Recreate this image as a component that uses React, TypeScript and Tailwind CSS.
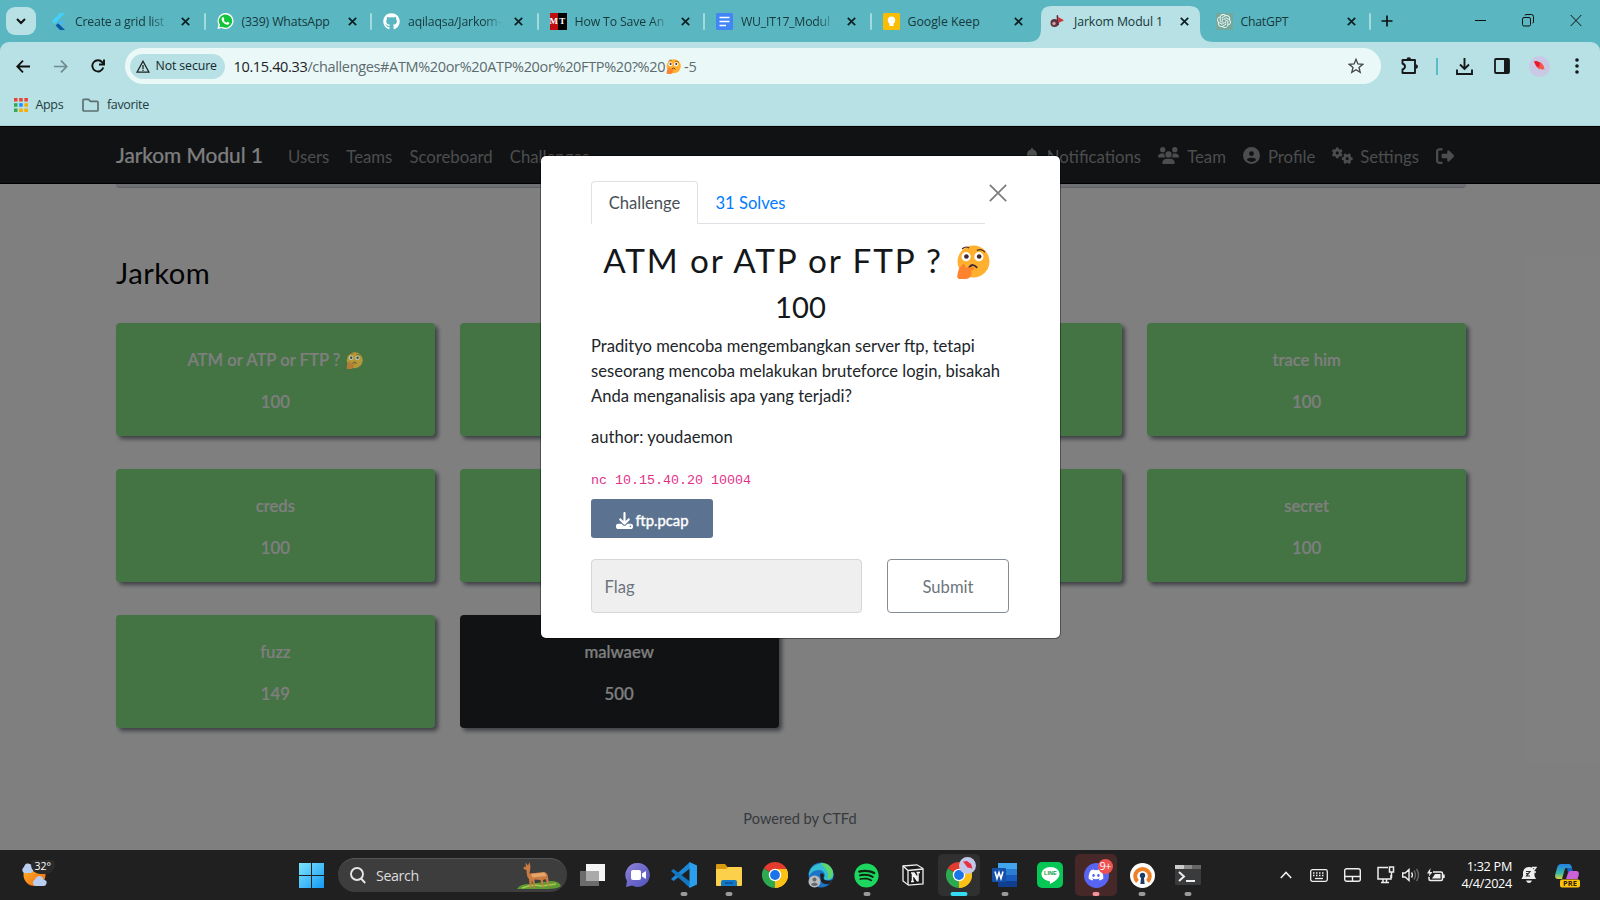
import type { ReactNode } from "react";
import { FaBell, FaUsers, FaCircleUser, FaGears, FaRightFromBracket, FaDownload, FaGithub, FaDiscord, FaSpotify } from "react-icons/fa6";
import { SiOpenai } from "react-icons/si";

function Thinking({ size }: { size: number }) {
  return (
    <svg width={size} height={size} viewBox="0 0 32 32" className="shrink-0">
      <circle cx="16.5" cy="15.5" r="15" fill="#ffb02e" />
      <circle cx="9.5" cy="11" r="4.3" fill="#fff" />
      <circle cx="21.5" cy="11" r="4.3" fill="#fff" />
      <circle cx="9.8" cy="10.8" r="2.2" fill="#402a32" />
      <circle cx="21.8" cy="10.8" r="2.2" fill="#402a32" />
      <path d="M6 3.500Q9 .8 12 2.600M20 5Q24 3 27 6.500" fill="none" stroke="#4a2c24" strokeWidth="1.1" strokeLinecap="round" />
      <path d="M12.500 20.800Q16 16.800 19.500 21" fill="none" stroke="#402a32" strokeWidth="1.700" strokeLinecap="round" />
      <path d="M6 18.500c1.500-1.500 3 .2 2.700 3L15.500 21c2 0 2 2.300.5 2.700l-2 .6c1.500 4-.5 7.700-5 7.700H3.500C1.500 32 1 30.500 1.300 28.500L2 25c.5-3 2.500-5 4-6.500z" fill="#ff822d" />
    </svg>
  );
}

function FlutterIcon() {
  return (
    <svg width="15" height="17" viewBox="0 0 15 17">
      <path d="M9 0h5L3.500 11 1 8z" fill="#43d1fb" />
      <path d="M9 8h5L9.500 12.500 7 10z" fill="#43b8f5" />
      <path d="M7 10.200 9.500 12.600 14 17H9L4.600 12.600z" fill="#0c5aa6" />
    </svg>
  );
}

function WhatsIcon() {
  return (
    <svg width="18" height="18" viewBox="0 0 18 18">
      <path d="M9 .5a8.500 8.500 0 1 1-4 16L.5 17.500 1.600 13A8.500 8.500 0 0 1 9 .5z" fill="#fff" />
      <path d="M9 2a7 7 0 1 1-3.500 13L2.500 15.700 3.200 13A7 7 0 0 1 9 2z" fill="#12c43a" />
      <path d="M5.500 5.200q1-1 1.600 0l.7 1.500q0 .6-.7 1.200 1 2 3 2.900.8-1 1.200-.9l1.700.9q.4.600-.5 1.600-1.500 1.200-4.500-.6T5 8q-.400-1.800.500-2.800z" fill="#fff" />
    </svg>
  );
}

function MtIcon() {
  return (
    <span className="flex h-[17px] w-[17px] bg-black font-['Liberation_Serif',serif] text-[9px] leading-[17px] font-bold text-white">
      <span className="w-[8.500px] bg-[#c00d0d] text-center">M</span>
      <span className="w-[8.500px] text-center">T</span>
    </span>
  );
}

function DocsIcon() {
  return (
    <svg width="17" height="17" viewBox="0 0 17 17">
      <rect width="17" height="17" rx="1.500" fill="#4285f4" />
      <path d="M3.500 4.500h10M3.500 8.500h10M3.500 12.500h6.500" stroke="#fff" strokeWidth="1.700" />
    </svg>
  );
}

function KeepIcon() {
  return (
    <svg width="17" height="17" viewBox="0 0 17 17">
      <rect width="17" height="17" rx="1.500" fill="#fbbc04" />
      <circle cx="8.500" cy="7.300" r="3.700" fill="#fff" />
      <path d="M6.500 9h4v4h-4z" fill="#fff" />
    </svg>
  );
}

function FlagIcon() {
  return (
    <svg width="15" height="15" viewBox="0 0 15 15">
      <circle cx="4.500" cy="9" r="4" fill="#5b3540" />
      <circle cx="4" cy="9.500" r="1.700" fill="#d8a0a4" />
      <path d="M6.500 1.500 8 1l1 10-1.500.5z" fill="#6b2530" />
      <path d="M8 3 14 6.200 8.500 9z" fill="#c8323c" />
    </svg>
  );
}

function GptIcon() {
  return (
    <span className="flex h-[17px] w-[17px] items-center justify-center bg-[#74a89c]">
      <SiOpenai size={14} color="#f1f7f5" />
    </span>
  );
}

type TabInfo = { title: string; icon: ReactNode; active?: boolean; faded?: boolean; sep: boolean; track: string };

const tabs: TabInfo[] = [
  { title: "Create a grid list", icon: <FlutterIcon />, faded: true, sep: true, track: "tracking-[-0.220px]" },
  { title: "(339) WhatsApp", icon: <WhatsIcon />, sep: true, track: "tracking-[-0.150px]" },
  { title: "aqilaqsa/Jarkom-", icon: <FaGithub size={17} color="#fff" />, faded: true, sep: true, track: "tracking-[-0.200px]" },
  { title: "How To Save An", icon: <MtIcon />, faded: true, sep: true, track: "tracking-[-0.150px]" },
  { title: "WU_IT17_Modul", icon: <DocsIcon />, faded: true, sep: true, track: "tracking-[-0.250px]" },
  { title: "Google Keep", icon: <KeepIcon />, sep: false, track: "tracking-[-0.020px]" },
  { title: "Jarkom Modul 1", icon: <FlagIcon />, active: true, sep: false, track: "tracking-[-0.100px]" },
  { title: "ChatGPT", icon: <GptIcon />, sep: true, track: "tracking-[-0.250px]" },
];

function Tab({ tab }: { tab: TabInfo }) {
  return (
    <div className="relative flex h-full w-[166.500px] shrink-0 items-start">
      {tab.active && (
        <svg width="190" height="36" viewBox="0 0 190 36" className="absolute top-[6px] left-[-10px]">
          <path d="M0 36Q13 36 13 23V10Q13 0 23 0H162Q172 0 172 10V23Q172 36 186 36z" fill="#b7e1e4" />
        </svg>
      )}
      <div className="relative mt-[6px] flex h-[30px] w-full items-center pl-[11px]">
        <span className="flex w-[17px] justify-center">{tab.icon}</span>
        <span
          className={
            "mt-[2px] ml-[8px] w-[95px] text-[12.300px] whitespace-nowrap text-[#16383c] " +
            (tab.faded ? "[mask-image:linear-gradient(to_right,black_80%,transparent)] " : "") +
            tab.track
          }
        >
          {tab.title}
        </span>
        <svg width="9" height="9" viewBox="0 0 9 9" className="ml-[11px]">
          <path d="M.8.800 8.200 8.200M8.200.800.800 8.200" stroke="#0c1f22" strokeWidth="1.700" />
        </svg>
        {tab.sep && <span className="ml-auto h-[17px] w-[2px] rounded bg-[#a5dadd]" />}
      </div>
    </div>
  );
}

function BrowserChrome() {
  return (
    <div className="h-[126px] shrink-0 bg-[#5ab7c1] font-['Open_Sans',sans-serif]">
      <div className="flex h-[42px] pl-[6px]">
        <div className="mt-[7px] mr-[3px] flex h-[28px] w-[30px] items-center justify-center rounded-[9px] bg-[#b7e1e4]">
          <svg width="10" height="7" viewBox="0 0 10 7">
            <path d="M1 1l4 4 4-4" fill="none" stroke="#111" strokeWidth="2" />
          </svg>
        </div>
        {tabs.map((t) => (
          <Tab key={t.title} tab={t} />
        ))}
        <svg width="12" height="12" viewBox="0 0 12 12" className="mt-[15px] ml-[9.500px]">
          <path d="M6 .5v11M.5 6h11" stroke="#111" strokeWidth="1.700" />
        </svg>
        <div className="mt-[14px] ml-auto flex gap-[36px] pr-[18px]">
          <svg width="11" height="13" viewBox="0 0 11 13"><path d="M0 6.500h11" stroke="#111" /></svg>
          <svg width="12" height="13" viewBox="0 0 12 13" fill="none" stroke="#111">
            <rect x=".5" y="3.500" width="8" height="8.500" rx="1.500" />
            <path d="M3 1.500q0-1 1-1h5.500q2 0 2 2V8q0 1-1 1" />
          </svg>
          <svg width="12" height="13" viewBox="0 0 12 13"><path d="M.7 1 11.300 12M11.300 1 .7 12" stroke="#111" /></svg>
        </div>
      </div>
      <div className="h-[84px] rounded-t-[9px] border-b border-[#a6d3d6] bg-[#b7e1e4]">
        <div className="flex h-[48px] items-center">
          <div className="flex w-[125px] items-center gap-[24px] pl-[16px] text-[#111]">
            <svg width="14" height="13" viewBox="0 0 14 13" fill="none" stroke="currentColor" strokeWidth="1.800"><path d="M14 6.500H1.500M7 .7 1.300 6.500 7 12.300" /></svg>
            <svg width="14" height="13" viewBox="0 0 14 13" fill="none" stroke="#6f8b8e" strokeWidth="1.700"><path d="M0 6.500h12.500M7 .7l5.700 5.800L7 12.300" /></svg>
            <svg width="14" height="14" viewBox="0 0 14 14" className="-ml-px" fill="none" stroke="currentColor" strokeWidth="1.900"><path d="M12.300 8.500A5.600 5.600 0 1 1 11.300 3.300L12.800 5" /><path d="M13 .5v5H8" /></svg>
          </div>
          <div className="flex h-[36px] w-[1256px] items-center rounded-full bg-[#ebf8f8] pl-[5px]">
            <div className="flex h-[25px] w-[95px] items-center rounded-full bg-[#b7e1e4] pl-[6px]">
              <svg width="14" height="13" viewBox="0 0 14 13" fill="none" stroke="#222" strokeWidth="1.300"><path d="M7 1.200 13 12.200H1zM7 5v4M7 9.700v1.200" /></svg>
              <span className="ml-[5.500px] text-[12.300px] font-medium tracking-[-0.100px] whitespace-nowrap text-[#16282a]">Not secure</span>
            </div>
            <div className="mt-[1px] ml-[8.500px] flex items-center text-[14.500px] tracking-[-0.350px] whitespace-nowrap text-[#5c6b6e]">
              <span className="text-[#202124]">10.15.40.33</span>
              <span>/challenges#ATM%20or%20ATP%20or%20FTP%20?%20</span>
              <span className="mr-[3px] ml-[1px]"><Thinking size={15} /></span>
              <span>-5</span>
            </div>
            <svg width="16" height="16" viewBox="0 0 16 16" className="mr-[17px] ml-auto">
              <path d="M8 1.300 9.900 6l4.900.3-3.800 3.200 1.200 4.900L8 11.700l-4.200 2.700L5 9.500 1.200 6.300 6.100 6z" fill="none" stroke="#444" strokeWidth="1.300" />
            </svg>
          </div>
          <div className="flex flex-1 items-center text-[#16181a]">
            <svg width="19" height="18" viewBox="0 0 19 18" className="ml-[19px]" fill="none" stroke="currentColor" strokeWidth="1.900">
              <path d="M2.500 3h12.500v13H2.500v-3.500q2.500-1 2.500-3T2.500 6.500z" strokeLinejoin="round" />
              <path d="M6.500 2.500a2.300 2.300 0 0 1 4.600 0zM15.500 7q2.500.5 2.500 2.500t-2.500 2.500z" fill="currentColor" stroke="none" />
            </svg>
            <span className="ml-[17px] h-[17px] w-[2px] bg-[#5abcc7]" />
            <svg width="17" height="17" viewBox="0 0 17 17" className="ml-[18px]" fill="none" stroke="currentColor" strokeWidth="1.900"><path d="M8.500 0v10.500M4 6.500l4.500 4.500L13 6.500M1 11.500V16h15v-4.500" /></svg>
            <svg width="16" height="16" viewBox="0 0 16 16" className="ml-[21px]"><rect x="1" y="1" width="14" height="14" rx="1" fill="none" stroke="currentColor" strokeWidth="1.800" /><path d="M10 1h5v14h-5z" fill="currentColor" /></svg>
            <svg width="21" height="21" viewBox="0 0 21 21" className="ml-[19px]"><circle cx="10.500" cy="10.500" r="10.500" fill="#c9c9e6" /><path d="M5 5.500l2.500-.5 4.500 1.500 2.500 3 1 4-1.500-.5-.5 1-2-1.500-1 1-3-2.500z" fill="#f4574e" /><path d="M5 5.500l2.500-.5 3.500 2-1 4.500-3-2z" fill="#e5172f" /></svg>
            <svg width="4" height="16" viewBox="0 0 4 16" className="ml-[25px]" fill="currentColor"><circle cx="2" cy="2" r="1.800" /><circle cx="2" cy="8" r="1.800" /><circle cx="2" cy="14" r="1.800" /></svg>
          </div>
        </div>
        <div className="flex h-[30px] items-center pl-[14px] text-[12.500px] tracking-[-0.350px] text-[#233c3f]">
          <svg width="14" height="14" viewBox="0 0 14 14">
            <path d="M0 0h3.500v3.500H0zM5.200 0h3.500v3.500H5.200zM10.400 0h3.500v3.500h-3.500z" fill="#ea4335" />
            <path d="M0 5.200h3.500v3.500H0zM0 10.400h3.500v3.500H0z" fill="#34a853" />
            <path d="M5.200 5.200h3.500v3.500H5.200z" fill="#1a8cff" />
            <path d="M10.400 5.200h3.500v3.500h-3.500zM5.200 10.400h3.500v3.500H5.200zM10.400 10.400h3.500v3.500h-3.500z" fill="#f9ab00" />
          </svg>
          <span className="ml-[7.500px] w-[46.500px]">Apps</span>
          <svg width="17" height="14" viewBox="0 0 17 14" fill="none" stroke="#5f6f71" strokeWidth="1.700"><path d="M1 2.300q0-1 1-1h4.500l2 2H15q1 0 1 1V12q0 1-1 1H2q-1 0-1-1z" /></svg>
          <span className="ml-[8px]">favorite</span>
        </div>
      </div>
    </div>
  );
}

type CardInfo = { name?: string; points?: string; open?: boolean; thinking?: boolean };

const cards: CardInfo[] = [
  { name: "ATM or ATP or FTP ?", points: "100", thinking: true },
  {},
  {},
  { name: "trace him", points: "100" },
  { name: "creds", points: "100" },
  {},
  {},
  { name: "secret", points: "100" },
  { name: "fuzz", points: "149" },
  { name: "malwaew", points: "500", open: true },
];

function Card({ card }: { card: CardInfo }) {
  return (
    <div
      className={
        "flex h-[113px] flex-col items-center rounded-[4px] pt-[25px] text-[16.700px] leading-[25px] font-medium text-white shadow-[3px_3px_4px_#7d828c] [&_span]:[-webkit-text-stroke:0.200px_currentColor] " +
        (card.open ? "bg-[#212529]" : "bg-[#88e688]")
      }
    >
      <div className="flex items-center gap-[6px]">
        <span>{card.name}</span>
        {card.thinking && (
          <div className="relative z-10 opacity-60">
            <Thinking size={17} />
          </div>
        )}
      </div>
      <span className="mt-[17px]">{card.points}</span>
    </div>
  );
}

function ChallengeModal() {
  return (
    <div className="absolute top-[30px] left-[541px] z-20 h-[482px] w-[519px] rounded-[5px] bg-white px-[50px] pt-[25px] text-[16.600px] text-[#212529] shadow-[0_0_0_1px_#00000060]">
      <div className="flex h-[43px] items-end">
        <div className="flex h-[43px] w-[394px] border-b border-[#dee2e6]">
          <div className="h-[43px] w-[107px] rounded-t-[4px] border border-b-0 border-[#dee2e6] bg-white text-center leading-[43px] text-[#495057]">Challenge</div>
          <div className="pl-[17.500px] leading-[45px] text-[#007bff]">31 Solves</div>
        </div>
        <svg width="18" height="18" viewBox="0 0 18 18" className="mb-[22px] ml-[3.500px]"><path d="M.8.800 17.200 17.200M17.200.800.800 17.200" stroke="#7c7c7c" strokeWidth="1.700" /></svg>
      </div>
      <div className="mt-[17px] flex h-[40px] items-center justify-center pr-[8px] text-[33.300px] tracking-[1.850px] whitespace-nowrap text-[#14171a]">
        <span>ATM or ATP or FTP ?</span>
        <span className="ml-[13px] pt-px"><Thinking size={34} /></span>
      </div>
      <div className="mt-[8px] h-[35px] text-center text-[29.200px] leading-[35px] text-[#14171a]">100</div>
      <p className="mt-[10px] leading-[25px] whitespace-nowrap">
        Pradityo mencoba mengembangkan server ftp, tetapi
        <br />
        seseorang mencoba melakukan bruteforce login, bisakah
        <br />
        Anda menganalisis apa yang terjadi?
      </p>
      <p className="mt-[16px] leading-[25px]">author: youdaemon</p>
      <p className="mt-[18px] h-[25px] font-['Liberation_Mono',monospace] text-[13.330px] leading-[25px] text-[#e0318a]">nc 10.15.40.20 10004</p>
      <div className="mt-[5.500px] flex h-[39px] w-[122px] items-center justify-center gap-[3px] rounded-[3px] bg-[#5b7290] pt-[4px] text-[14.800px] text-white">
        <FaDownload size={17} />
        <span className="[-webkit-text-stroke:0.400px_white]">ftp.pcap</span>
      </div>
      <div className="mt-[21px] flex gap-[25px]">
        <div className="h-[54px] w-[271px] rounded-[4px] border border-[#d4d7da] bg-[#efefef] pl-[12.500px] leading-[54px] text-[#6c757d]">Flag</div>
        <div className="h-[54px] w-[122px] rounded-[4px] border border-[#868c93] text-center leading-[54px] text-[#6c757d]">Submit</div>
      </div>
    </div>
  );
}

function Page() {
  return (
    <div className="relative h-[724px] shrink-0 overflow-hidden bg-white font-['Lato',sans-serif]">
      <div className="h-[58px] border-y border-black bg-[#212529]">
        <div className="mx-auto flex h-full w-[1368px] items-center text-[16.750px] text-[#989a9c]">
          <span className="w-[172px] pb-px text-[20.830px] text-white [-webkit-text-stroke:0.200px_white]">Jarkom Modul 1</span>
          <span className="flex gap-[17px] pt-[4px]">
            <span>Users</span><span>Teams</span><span>Scoreboard</span><span>Challenges</span>
          </span>
          <span className="ml-auto flex items-center gap-[17px] pt-px pr-[30px]">
            <span className="flex items-center gap-[7px]"><FaBell size={16} /><span className="pt-[3px]">Notifications</span></span>
            <span className="flex items-center gap-[8px]"><FaUsers size={21} /><span className="pt-[3px]">Team</span></span>
            <span className="flex items-center gap-[8px]"><FaCircleUser size={17} /><span className="pt-[3px]">Profile</span></span>
            <span className="flex items-center gap-[7px]"><FaGears size={21} /><span className="pt-[3px]">Settings</span></span>
            <FaRightFromBracket size={18} />
          </span>
        </div>
      </div>
      <div className="mx-auto w-[1368px]">
        <div className="h-[4px] w-[1350px] rounded-b-[4px] border-b border-[#c0c5d0] bg-[#dde0e6]" />
        <div className="mt-[65px] text-[29.200px] leading-[40px] tracking-[0.450px] text-[#050505]">Jarkom</div>
        <div className="mt-[30px] grid w-[1350px] grid-cols-4 gap-x-[25px] gap-y-[33px]">
          {cards.map((card, i) => (
            <Card key={i} card={card} />
          ))}
        </div>
      </div>
      <div className="mt-[79px] text-center text-[14.600px] leading-[24px] text-[#6c757d]">Powered by CTFd</div>
      <div className="absolute inset-0 bg-black/50" />
      <ChallengeModal />
    </div>
  );
}

function ChromeIcon({ size }: { size: number }) {
  return (
    <svg width={size} height={size} viewBox="0 0 26 26">
      <path d="M13 13 1.740 6.500A13 13 0 0 1 24.260 6.500z" fill="#e33b2e" />
      <path d="M13 13 24.260 6.500A13 13 0 0 1 13 26z" fill="#fbc116" />
      <path d="M13 13V26A13 13 0 0 1 1.740 6.500z" fill="#2da94f" />
      <path d="M13 7h11.500a13 13 0 0 1-11.500 19l5.200-10z" fill="#fbc116" />
      <circle cx="13" cy="13" r="6.200" fill="#fff" />
      <circle cx="13" cy="13" r="4.900" fill="#1a73e8" />
    </svg>
  );
}

const apps: { key: string; icon: ReactNode; dot?: string; tile?: string }[] = [
  { key: "taskview", icon: <svg width="26" height="24" viewBox="0 0 26 24"><path d="M7 1h19v17H7z" fill="#f4f4f4" /><path d="M1 8h19v15H1z" fill="#6c6c6c" /><path d="M7 8h13v10H7z" fill="#aaa" /></svg> },
  { key: "chat", icon: <svg width="26" height="26" viewBox="0 0 26 26"><defs><linearGradient id="chat" x1="0" y1="0" x2="1" y2="1"><stop offset="0" stopColor="#8f83d8" /><stop offset="1" stopColor="#4d51bd" /></linearGradient></defs><path d="M13 1a12 12 0 1 1-6 22.500L1 25l1-6A12 12 0 0 1 13 1z" fill="url(#chat)" /><rect x="6" y="8" width="10" height="10" rx="2" fill="#fff" /><path d="M17 11.500l4-2.500v8l-4-2.500z" fill="#fff" /></svg> },
  { key: "code", dot: "bg-[#9a9a9a] w-[7px]", icon: <svg width="26" height="26" viewBox="0 0 26 26"><path d="M0 17l2.500 2L19 6.500V0z" fill="#1c87d6" /><path d="M0 9 2.500 7 19 19.500V26z" fill="#1276c0" /><path d="M18.500 0 26 3.500v19L18.500 26z" fill="#2b9fee" /></svg> },
  { key: "files", dot: "bg-[#9a9a9a] w-[7px]", icon: <svg width="26" height="24" viewBox="0 0 26 24"><path d="M0 2q0-1 1-1h8l2.500 3H25v5H0z" fill="#d99a12" /><path d="M0 6h10l2-2h13q1 0 1 1v17q0 1-1 1H1q-1 0-1-1z" fill="#fdd04c" /><path d="M5 23v-4q0-2 2-2h12q2 0 2 2v4z" fill="#1379c9" /><path d="M9 20h8" stroke="#0a4f91" strokeWidth="1.500" /></svg> },
  { key: "chrome", icon: <ChromeIcon size={26} /> },
  { key: "edge", icon: <svg width="26" height="26" viewBox="0 0 26 26"><circle cx="13" cy="13" r="12.500" fill="#1b74c8" /><path d="M1 11A12.500 12.500 0 0 1 25.500 12q0 6-6 6-4 0-4-2 2-1.500 1-4.500Q15 8 11 8 4 8 1 14z" fill="#35bdd1" /><path d="M12 1q9-1 12.500 7 2 8-5 9.500 2-5-1-9.500T12 1z" fill="#5fd66a" /><path d="M12 12q4-2 4 2-1 2 0 3.500 4 2.500 9 0l-3 4q-6 2-9-2z" fill="#202020" /><circle cx="6.500" cy="19.500" r="6" fill="#b9bcbd" /><circle cx="6.500" cy="17.500" r="2" fill="#66696b" /><path d="M3 22.500q3.500-4 7 0-3.500 3-7 0z" fill="#66696b" /></svg> },
  { key: "spotify", dot: "bg-[#9a9a9a] w-[7px]", icon: <span className="rounded-full bg-[#10240f]"><FaSpotify size={25} color="#1ed760" /></span> },
  { key: "notion", icon: <svg width="22" height="22" viewBox="0 0 22 22"><path d="M1 2 15 .8 21 4.500V20L6.500 21.200 1 17z" fill="#1a1a1a" stroke="#f0f0f0" strokeWidth="1.300" /><path d="M1 2l5 4.500L21 5M6 6.500V21" fill="none" stroke="#f0f0f0" strokeWidth="1.300" /><path d="M9 9h3l4 6V8.500M10.500 9v8.500M9 17.500h3M16 17.500V8.500M14.500 8.500h3.500M10.500 9.500l5 7.500" fill="none" stroke="#f4f4f4" strokeWidth="1.500" /></svg> },
  { key: "chrome2", tile: "bg-[#303030]", dot: "bg-[#35dcf5] w-[17px]", icon: <span className="relative"><ChromeIcon size={26} /><svg width="17" height="17" viewBox="0 0 17 17" className="absolute top-[-5px] right-[-4px]"><circle cx="8.500" cy="8.500" r="8.500" fill="#c3c8e8" /><path d="M4 4.500l4-.5 4 3 1.500 4.500-5-1z" fill="#e83040" /></svg></span> },
  { key: "word", dot: "bg-[#9a9a9a] w-[7px]", icon: <svg width="26" height="24" viewBox="0 0 26 24"><path d="M6 0h19v6H6z" fill="#41a5ee" /><path d="M6 6h19v6H6z" fill="#2b7cd3" /><path d="M6 12h19v6H6z" fill="#185abd" /><path d="M6 18h19v6H6z" fill="#103f91" /><rect y="5" width="14" height="14" rx="1" fill="#1450a8" /><path d="M3 8.500 5 15.500 7 9.500 9 15.500 11 8.500" fill="none" stroke="#fff" strokeWidth="1.600" /></svg> },
  { key: "line", icon: <span className="relative flex h-[26px] w-[26px] items-center justify-center rounded-[5px] bg-[#06c755]"><svg width="19" height="19" viewBox="0 0 19 19" className="absolute"><path d="M9.500 1C4.500 1 .5 4 .5 8c0 3.500 3 6.300 7.500 7 1.500.3 1 1.500.8 3 4-2 9.700-5.500 9.700-10 0-4-4-7-9-7z" fill="#fff" /></svg><span className="relative mb-[3px] font-['Liberation_Sans',sans-serif] text-[5.500px] leading-none font-bold text-[#06a046]">LINE</span></span> },
  { key: "discord", tile: "bg-[#472829]", dot: "bg-[#f4949b] w-[7px]", icon: <span className="relative flex h-[25px] w-[25px] items-center justify-center rounded-full bg-[#5865f2]"><FaDiscord size={16} color="#fff" /><span className="absolute top-[-4px] right-[-4px] h-[15px] w-[15px] rounded-full bg-[#ee5253] text-center font-['Open_Sans',sans-serif] text-[11px] leading-[14px] tracking-[-0.500px] text-white">9+</span></span> },
  { key: "vpn", dot: "bg-[#9a9a9a] w-[7px]", icon: <svg width="25" height="25" viewBox="0 0 25 25"><circle cx="12.500" cy="12.500" r="12.500" fill="#fff" /><path d="M7.500 18.500a7.300 7.300 0 1 1 10 0" fill="none" stroke="#ee8128" strokeWidth="4" /><circle cx="12.500" cy="12.500" r="2.700" fill="#1c3d68" /><path d="M11.200 13h2.600l.8 8h-4.200z" fill="#1c3d68" /></svg> },
  { key: "terminal", dot: "bg-[#9a9a9a] w-[7px]", icon: <svg width="26" height="20" viewBox="0 0 26 20"><rect width="26" height="20" rx="1.500" fill="#393b3d" /><path d="M0 0h16v4H0z" fill="#ccc" /><path d="M9 0h8v4H9z" fill="#8c8c8c" /><path d="M17 0h9v4h-9z" fill="#666" /><path d="M4 7l5 4.500L4 16M11 16h9" fill="none" stroke="#eee" strokeWidth="2" /></svg> },
];

function Taskbar() {
  return (
    <div className="relative flex h-[50px] shrink-0 items-center bg-[#202020] font-['Open_Sans',sans-serif] text-white">
      <div className="flex w-[299px] items-center pl-[21px]">
        <svg width="34" height="28" viewBox="0 0 34 28" className="mb-[3px]">
          <defs>
            <linearGradient id="sun" x1="0" y1="0" x2="1" y2="1"><stop offset="0" stopColor="#ffb52e" /><stop offset="1" stopColor="#f2690c" /></linearGradient>
          </defs>
          <circle cx="13.500" cy="15" r="11" fill="url(#sun)" />
          <path d="M3 13a3.500 3.500 0 0 1 0-6q1-4 4-3.500 4 .5 5 4.500 1 5-3 5z" fill="#b9cdf0" />
          <path d="M14 26a3.500 3.500 0 0 1 0-6.500q1.500-4 5-3.500 3 .5 3.500 3.500 4 1 3 4-.5 2.500-3 2.500z" fill="#b9cdf0" />
          <rect x="10" y="-4" width="24" height="18" rx="9" fill="#2a2a2a" />
          <text x="13.500" y="10" fontSize="11.500" fill="#fff" fontFamily="Open Sans" textLength="16.500" lengthAdjust="spacingAndGlyphs">32°</text>
        </svg>
      </div>
      <svg width="25" height="25" viewBox="0 0 25 25">
        <defs><linearGradient id="win" x1="0" y1="0" x2="1" y2="1"><stop offset="0" stopColor="#7fe4fc" /><stop offset="1" stopColor="#139af3" /></linearGradient></defs>
        <path d="M0 0h12v12H0zM13 0h12v12H13zM0 13h12v12H0zM13 13h12v12H13z" fill="url(#win)" />
      </svg>
      <div className="ml-[14px] flex h-[34px] w-[229px] items-center rounded-full border-t border-[#555] bg-[#3d3d3d] pl-[12px]">
        <svg width="16" height="17" viewBox="0 0 16 17" fill="none" stroke="#e6e6e6" strokeWidth="1.900"><circle cx="7" cy="7" r="6" /><path d="M11 11.500 15.200 16" /></svg>
        <span className="ml-[10px] text-[14.300px] tracking-[-0.400px] text-[#dcdcdc]">Search</span>
        <svg width="44" height="28" viewBox="0 0 44 28" className="mr-[6px] ml-auto">
          <path d="M0 27q3-5 12-5l22-3q8 0 10 5-3 3-14 3z" fill="#5f9a35" />
          <path d="M5 26q10-4 20-2l14-2" stroke="#a4cc4e" strokeWidth="1.500" fill="none" />
          <path d="M7 4.500 9 5 8.500.5 11 3.500 12.500 0 13.500 5 12.500 11.500 27 10q3.500.5 4 5l1.500 9.500h-1.300L28.500 17l-2.500 1 .5 7.500h-1.300L23.500 18l-6-.5.5 8.500h-1.300L15 18l-1 8h-1.200L12 17q-2.500-2-2.500-9L6.500 7z" fill="#c87b43" />
          <path d="M14 12l13-1.500q2 1 2.500 3.500l-14 1.500z" fill="#e5a468" />
        </svg>
      </div>
      <div className="ml-[2px] flex">
        {apps.map((a) => (
          <div key={a.key} className="flex w-[45.850px] justify-center">
            <div className={"relative flex h-[42px] w-[42px] items-center justify-center rounded-[5px] " + (a.tile ?? "")}>
              {a.icon}
              {a.dot && <span className={"absolute bottom-0 left-1/2 h-[4px] -translate-x-1/2 rounded-full " + a.dot} />}
            </div>
          </div>
        ))}
      </div>
      <div className="ml-auto flex items-center pr-[20px]">
        <svg width="12" height="8" viewBox="0 0 12 8" className="mr-[18px]"><path d="M.8 7 6 1.500 11.200 7" fill="none" stroke="#eee" strokeWidth="1.600" /></svg>
        <svg width="18" height="13" viewBox="0 0 18 13" className="mr-[16px]" fill="none" stroke="#eee" strokeWidth="1.300"><rect x=".7" y=".7" width="16.600" height="11.600" rx="1.800" /><path d="M3 4h12M3 6.500h12" strokeDasharray="1.500 1.500" /><path d="M5 9.500h8" /></svg>
        <svg width="17" height="14" viewBox="0 0 17 14" className="mr-[16px]" fill="none" stroke="#eee" strokeWidth="1.400"><rect x=".7" y=".7" width="15.600" height="12.600" rx="2" /><path d="M1 8.500h15M8.500 8.500V13" /></svg>
        <svg width="18" height="18" viewBox="0 0 18 18" className="mr-[7px]" fill="none" stroke="#eee" strokeWidth="1.500"><path d="M11 1.500H1v11.500h13V9M4 16.500h8M6 13v3M9.500 13v3" /><path d="M12.500 1h4v5h-4zM14.500 6v6" /></svg>
        <svg width="18" height="14" viewBox="0 0 18 14" className="mr-[7px]" fill="none" stroke="#eee" strokeWidth="1.400"><path d="M.7 5h2.500L7 1.500v11L3.200 9H.7zM9.500 4.500q1.700 2.500 0 5" /><path d="M12 2.500q3 4.500 0 9M14.500 1q4 6 0 12" stroke="#666" /></svg>
        <svg width="18" height="14" viewBox="0 0 18 14" className="mr-[15px]" fill="none" stroke="#eee" strokeWidth="1.500"><path d="M6 4h8q1.500 0 1.500 1.500V11q0 1.500-1.500 1.500H3.500Q2 12.500 2 11V9" /><path d="M16.800 6.500v3.500" strokeWidth="1.800" /><path d="M8 6h5.500v4.500H5z" fill="#eee" stroke="none" /><path d="M3.500 0 0 5.500h2.500L1.500 9 5.500 4H3z" fill="#eee" stroke="none" /></svg>
        <div className="mr-[9px] mb-px w-[52px] text-right text-[12.700px] leading-[17px] tracking-[-0.300px] whitespace-nowrap">
          <div>1:32 PM</div>
          <div className="-ml-[10px]">4/4/2024</div>
        </div>
        <svg width="16" height="18" viewBox="0 0 16 18" className="mr-[18px]"><path d="M2 6q1-5 6-5 5 0 5.500 5v4l1.500 3H.5L2 10zM5 14.500h6q-1 2.500-3 2.500t-3-2.500z" fill="#eee" /><path d="M5 5.500h4L5.500 10H9M5 7.700h3" stroke="#333" fill="none" strokeWidth="1.200" /><path d="M11 1.500h4L11.500 6H15" stroke="#eee" fill="none" strokeWidth="1.300" /></svg>
        <svg width="25" height="25" viewBox="0 0 25 25">
          <defs><linearGradient id="cp" x1="0" y1="0" x2="0" y2="1"><stop offset="0" stopColor="#2382e8" /><stop offset=".6" stopColor="#39b4a8" /><stop offset="1" stopColor="#d6d63a" /></linearGradient></defs>
          <path d="M6 1h8q2 0 3 4H11q-1 0-2 4l-2 7H3q-4 0-2.500-5.500L2 5Q3 1 6 1z" fill="url(#cp)" />
          <path d="M12 5h5l1 4h-5z" fill="#175fc4" />
          <path d="M16 8h5q4 0 2.500 5l-1 3H11l2-6q.5-2 3-2z" fill="#cb62d8" />
          <rect x="5" y="16.500" width="20" height="8" rx="2" fill="#ffc20e" />
          <text x="8" y="23.200" fontSize="7.500" fontWeight="bold" fontFamily="Open Sans" fill="#2b2100">PRE</text>
        </svg>
      </div>
    </div>
  );
}

export default function App() {
  return (
    <div className="flex h-[900px] w-[1600px] flex-col overflow-hidden">
      <BrowserChrome />
      <Page />
      <Taskbar />
    </div>
  );
}
